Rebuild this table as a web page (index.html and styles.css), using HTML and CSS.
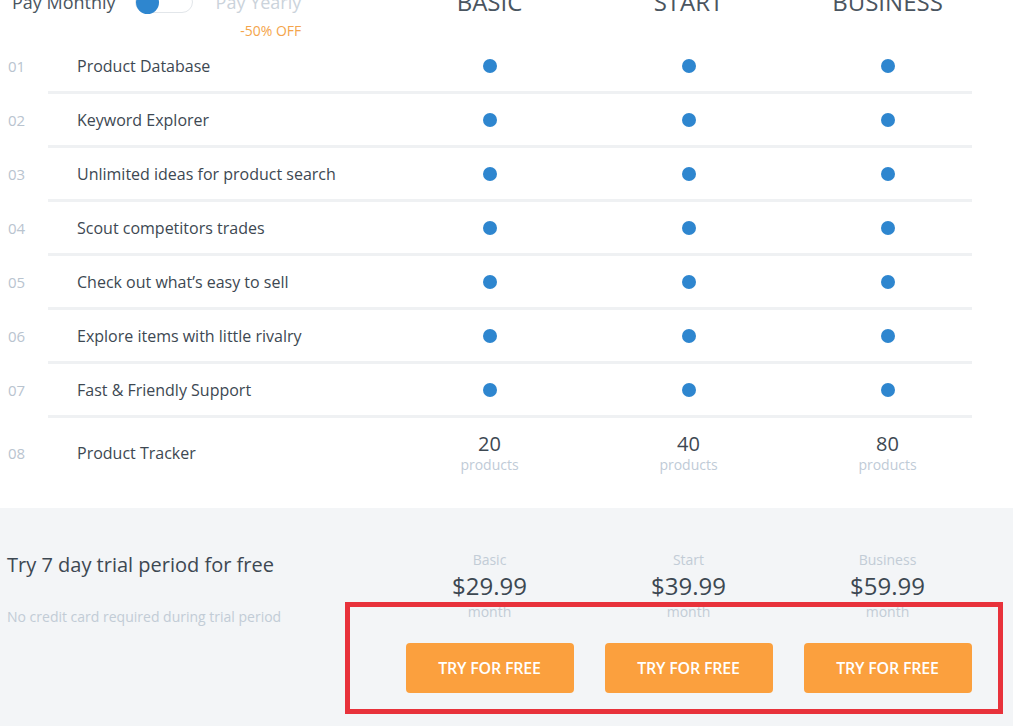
FILE: index.html
```html
<!DOCTYPE html>
<html>
<head>
<meta charset="utf-8">
<link rel="stylesheet" href="styles.css">
</head>
<body>
<div class="page">
  <div class="head">
    <div class="billing">
      <span class="bill-label">Pay Monthly</span>
      <span class="toggle"><span class="knob"></span></span>
      <div class="yearly">
        <span class="bill-label muted">Pay Yearly</span>
        <span class="off">-50% OFF</span>
      </div>
    </div>
    <div class="plan">BASIC</div>
    <div class="plan">START</div>
    <div class="plan">BUSINESS</div>
  </div>

  <div class="row"><span class="num">01</span><span class="feat">Product Database</span><span class="cell"><i class="dot"></i></span><span class="cell"><i class="dot"></i></span><span class="cell"><i class="dot"></i></span></div>
  <div class="sep"></div>
  <div class="row"><span class="num">02</span><span class="feat">Keyword Explorer</span><span class="cell"><i class="dot"></i></span><span class="cell"><i class="dot"></i></span><span class="cell"><i class="dot"></i></span></div>
  <div class="sep"></div>
  <div class="row"><span class="num">03</span><span class="feat">Unlimited ideas for product search</span><span class="cell"><i class="dot"></i></span><span class="cell"><i class="dot"></i></span><span class="cell"><i class="dot"></i></span></div>
  <div class="sep"></div>
  <div class="row"><span class="num">04</span><span class="feat">Scout competitors trades</span><span class="cell"><i class="dot"></i></span><span class="cell"><i class="dot"></i></span><span class="cell"><i class="dot"></i></span></div>
  <div class="sep"></div>
  <div class="row"><span class="num">05</span><span class="feat">Check out what’s easy to sell</span><span class="cell"><i class="dot"></i></span><span class="cell"><i class="dot"></i></span><span class="cell"><i class="dot"></i></span></div>
  <div class="sep"></div>
  <div class="row"><span class="num">06</span><span class="feat">Explore items with little rivalry</span><span class="cell"><i class="dot"></i></span><span class="cell"><i class="dot"></i></span><span class="cell"><i class="dot"></i></span></div>
  <div class="sep"></div>
  <div class="row"><span class="num">07</span><span class="feat">Fast &amp; Friendly Support</span><span class="cell"><i class="dot"></i></span><span class="cell"><i class="dot"></i></span><span class="cell"><i class="dot"></i></span></div>
  <div class="sep"></div>
  <div class="row row-last"><span class="num">08</span><span class="feat">Product Tracker</span>
    <span class="cell count"><b>20</b><small>products</small></span>
    <span class="cell count"><b>40</b><small>products</small></span>
    <span class="cell count"><b>80</b><small>products</small></span>
  </div>

  <div class="trial">
    <div class="trial-text">
      <div class="trial-title">Try 7 day trial period for free</div>
      <div class="trial-sub">No credit card required during trial period</div>
    </div>
    <div class="price">
      <span class="p-name">Basic</span><span class="p-val">$29.99</span><span class="p-per">month</span>
      <a class="btn">TRY FOR FREE</a>
    </div>
    <div class="price">
      <span class="p-name">Start</span><span class="p-val">$39.99</span><span class="p-per">month</span>
      <a class="btn">TRY FOR FREE</a>
    </div>
    <div class="price">
      <span class="p-name">Business</span><span class="p-val">$59.99</span><span class="p-per">month</span>
      <a class="btn">TRY FOR FREE</a>
    </div>
    <div class="highlight"></div>
  </div>
</div>
</body>
</html>
```

FILE: styles.css
```css
* { box-sizing: border-box; }
html, body { margin: 0; padding: 0; background: #fff; }
body {
  font-family: "Open Sans", "Noto Sans", sans-serif;
  color: #3d4852;
  width: 1013px;
  height: 726px;
  overflow: hidden;
}
.page { position: relative; }

.head {
  display: grid;
  grid-template-columns: 390px 199px 199px 199px;
  height: 54px;
  margin-top: -14px;
}
.billing {
  display: flex;
  align-items: flex-start;
  padding: 4px 0 0 12px;
}
.bill-label {
  font-size: 18px;
  line-height: 24px;
  color: #4a5560;
}
.bill-label.muted { color: #cbd3db; }
.toggle {
  position: relative;
  width: 58px;
  height: 22px;
  margin: 1px 0 0 19px;
  border: 1px solid #e2e6ea;
  border-radius: 11px;
  background: #fff;
}
.knob {
  position: absolute;
  left: 0;
  top: -1px;
  width: 23px;
  height: 23px;
  border-radius: 50%;
  background: #2e86cf;
}
.yearly {
  display: flex;
  flex-direction: column;
  align-items: flex-end;
  margin-left: 23px;
}
.off {
  margin-top: 8px;
  font-size: 14px;
  line-height: 18px;
  color: #f4a54c;
}
.plan {
  text-align: center;
  font-size: 24px;
  line-height: 32px;
  color: #4a5560;
}

.row {
  display: grid;
  grid-template-columns: 77px 313px 199px 199px 199px;
  align-items: center;
  height: 51px;
}
.row-last { height: 70px; margin-bottom: 20px; }
.num {
  padding-left: 8px;
  font-size: 15px;
  color: #b9c4cf;
}
.feat {
  font-size: 16px;
  color: #3d4852;
}
.cell {
  display: flex;
  justify-content: center;
  align-items: center;
}
.dot {
  width: 14px;
  height: 14px;
  border-radius: 50%;
  background: #2e86cf;
}
.count { flex-direction: column; }
.count b {
  font-weight: 400;
  font-size: 20px;
  line-height: 24px;
  color: #3d4852;
}
.count small {
  font-size: 14px;
  line-height: 18px;
  color: #bfcbd7;
}
.sep {
  height: 3px;
  margin: 0 41px 0 48px;
  background: #eff1f3;
}

.trial {
  position: relative;
  display: grid;
  grid-template-columns: 390px 199px 199px 199px;
  background: #f3f5f7;
  height: 218px;
  padding-top: 42px;
}
.trial-text { padding: 1px 0 0 7px; }
.trial-title {
  font-size: 20px;
  line-height: 28px;
  color: #3d4852;
}
.trial-sub {
  margin-top: 28px;
  font-size: 14px;
  line-height: 20px;
  color: #c2ccd6;
}
.price {
  display: flex;
  flex-direction: column;
  align-items: center;
}
.p-name, .p-per {
  font-size: 14px;
  line-height: 20px;
  color: #c2ccd6;
}
.p-val {
  font-size: 24px;
  line-height: 32px;
  color: #3d4852;
}
.btn {
  display: flex;
  align-items: center;
  justify-content: center;
  margin-top: 21px;
  width: 168px;
  height: 50px;
  border-radius: 4px;
  background: #fba03e;
  color: #fff;
  font-size: 16px;
  font-weight: 600;
  letter-spacing: -0.2px;
}
.highlight {
  position: absolute;
  left: 345px;
  top: 94px;
  width: 658px;
  height: 112px;
  border: 5px solid #e8323b;
  pointer-events: none;
}
```
